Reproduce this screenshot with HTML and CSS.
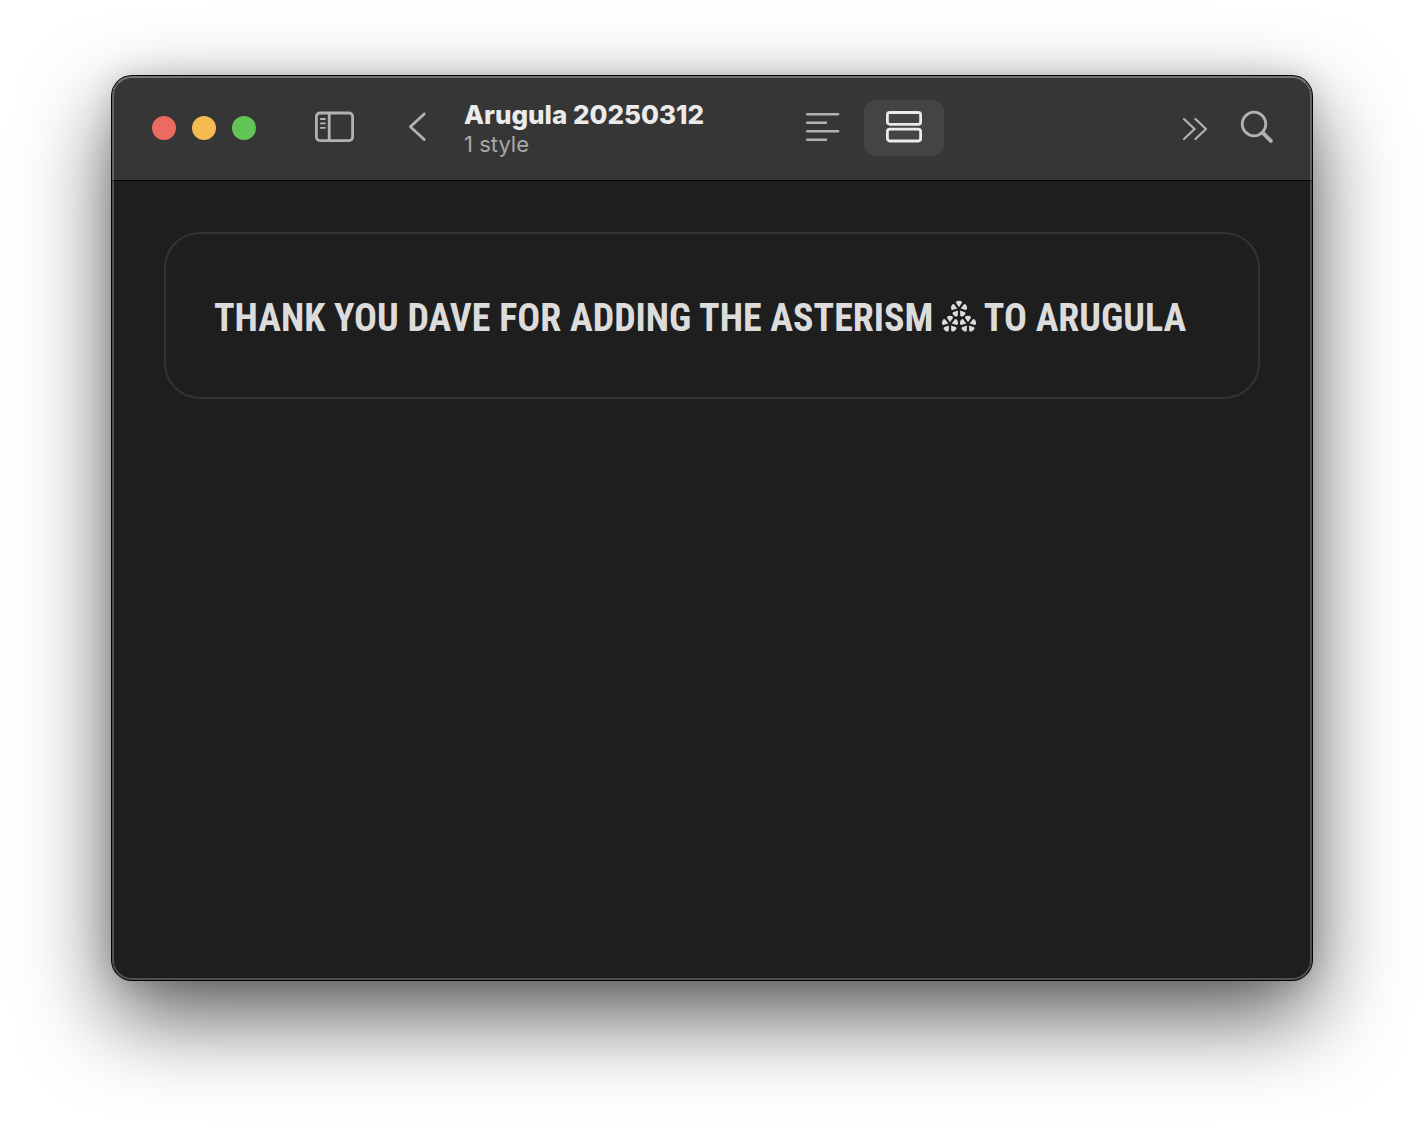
FILE: index.html
```html
<!DOCTYPE html>
<html lang="en">

<head>
  <meta charset="UTF-8" />
  <meta name="viewport" content="width=device-width, initial-scale=1.0" />
  <title>Arugula 20250312</title>
  <link rel="stylesheet" href="styles.css">
</head>

<body>
  <div class="window">
    <header class="toolbar">
      <div class="window-controls">
        <button class="dot close" aria-label="Close"></button>
        <button class="dot minimize" aria-label="Minimize"></button>
        <button class="dot expand" aria-label="Zoom"></button>
      </div>

      <button class="tool sidebar-toggle" aria-label="Toggle sidebar">
        <svg width="40" height="32" viewBox="0 0 40 32" fill="none" stroke="currentColor" stroke-width="2.8">
          <rect x="2.4" y="1" width="36.2" height="27.6" rx="3.6" />
          <path d="M15.2 2v26" />
          <path d="M6.8 7h4.2M6.8 11.4h4.2M6.8 15.8h4.2" stroke-width="1.8" stroke-linecap="round" />
        </svg>
      </button>

      <button class="tool back" aria-label="Back">
        <svg width="20" height="32" viewBox="0 0 20 32" fill="none" stroke="currentColor" stroke-width="2.8" stroke-linecap="round" stroke-linejoin="round">
          <path d="M17.2 2 3.4 14.8l13.8 12.7" />
        </svg>
      </button>

      <div class="title">
        <h1>Arugula 20250312</h1>
        <p>1 style</p>
      </div>

      <div class="view-switch">
        <button class="view" aria-label="Text view">
          <svg width="36" height="32" viewBox="0 0 36 32" stroke="currentColor" stroke-width="2.4" stroke-linecap="round">
            <path d="M1.2 2.2h31M1.2 10.7h18.8M1.2 19.2h31M1.2 27.7h18.8" />
          </svg>
        </button>
        <button class="view active" aria-label="Card view">
          <svg width="36" height="32" viewBox="0 0 36 32" fill="none" stroke="currentColor" stroke-width="2.8">
            <rect x="1.4" y="0.5" width="33.2" height="11.8" rx="2.4" />
            <rect x="1.4" y="17.2" width="33.2" height="11.8" rx="2.4" />
          </svg>
        </button>
      </div>

      <div class="toolbar-end">
        <button class="tool more" aria-label="More">
          <svg width="28" height="24" viewBox="0 0 28 24" fill="none" stroke="currentColor" stroke-width="2.2" stroke-linecap="round" stroke-linejoin="round">
            <path d="M4 3l10.6 10L4 23M15.4 3L26 13l-10.6 10" />
          </svg>
        </button>
        <button class="tool search" aria-label="Search">
          <svg width="34" height="34" viewBox="0 0 34 34" fill="none" stroke="currentColor" stroke-linecap="round">
            <circle cx="14" cy="13" r="11.8" stroke-width="2.8" />
            <path d="M22.6 21.6l8.2 8.2" stroke-width="4" />
          </svg>
        </button>
      </div>
    </header>

    <main class="content">
      <div class="sample">
        <p class="sample-text">THANK YOU DAVE FOR ADDING THE ASTERISM
          <svg class="asterism" width="34" height="32" viewBox="0 0 34 32" fill="currentColor" role="img" aria-label="asterism">
            <defs>
              <path id="petal" d="M0 -1.8L-3 -6.2Q-3.2 -8 0 -8.2Q3.2 -8 3 -6.2Z" />
              <g id="flower">
                <use href="#petal" />
                <use href="#petal" transform="rotate(72)" />
                <use href="#petal" transform="rotate(144)" />
                <use href="#petal" transform="rotate(216)" />
                <use href="#petal" transform="rotate(288)" />
              </g>
            </defs>
            <use href="#flower" x="17" y="10" />
            <use href="#flower" x="8" y="25" />
            <use href="#flower" x="26" y="25" />
          </svg>
          TO ARUGULA</p>
      </div>
    </main>
  </div>
</body>

</html>
```
FILE: styles.css
```css
* {
  box-sizing: border-box;
}

body {
  display: flex;
  min-height: 100vh;
  margin: 0;
  padding: 76px 112px 148px;
  background: #fff;
  font-family: Inter, "Liberation Sans", sans-serif;
}

h1,
p {
  margin: 0;
}

button {
  padding: 0;
  border: none;
  background: none;
  color: #b2b2b2;
  cursor: pointer;
}

svg {
  display: block;
  overflow: visible;
}

.window {
  display: flex;
  flex: 1;
  flex-direction: column;
  position: relative;
  min-width: 0;
  border-radius: 20px;
  background: #1e1e1e;
  box-shadow: 0 0 0 1px #000, 0 0 30px rgba(0, 0, 0, 0.15), 0 36px 88px rgba(0, 0, 0, 0.65);
}

/* light edge just inside the window */
.window::after {
  content: "";
  position: absolute;
  inset: 0;
  border: 2px solid rgba(255, 255, 255, 0.22);
  border-top-color: rgba(255, 255, 255, 0.32);
  border-radius: 20px;
  pointer-events: none;
}

.toolbar {
  display: flex;
  align-items: center;
  height: 105px;
  padding: 0 38px 0 40px;
  border-bottom: 1px solid #000;
  border-radius: 20px 20px 0 0;
  background: #363636;
}

.window-controls {
  display: flex;
  gap: 16px;
}

.dot {
  width: 24px;
  height: 24px;
  border-radius: 50%;
}

.close {
  background: #ed6a5e;
}

.minimize {
  background: #f5bd4f;
}

.expand {
  background: #61c454;
}

.sidebar-toggle {
  margin-left: 58px;
}

.back {
  margin-left: 53px;
}

.title {
  margin-left: 37px;
  padding-top: 2px;
  white-space: nowrap;
}

.title h1 {
  color: #ebebeb;
  font-size: 26px;
  font-weight: 800;
  line-height: 30px;
}

.title p {
  color: #a8a8a8;
  font-size: 22px;
  line-height: 28px;
}

.view-switch {
  display: flex;
  margin-left: 80px;
}

.view {
  display: flex;
  align-items: center;
  justify-content: center;
  width: 80px;
  height: 56px;
  border-radius: 12px;
}

.view.active {
  background: #444;
  color: #ebebeb;
}

.toolbar-end {
  display: flex;
  align-items: center;
  gap: 32px;
  margin-left: auto;
}

.content {
  flex: 1;
  padding: 51px 52px;
}

.sample {
  padding: 51px 48px 45px;
  border: 2px solid #333;
  border-radius: 36px;
}

.sample-text {
  color: #dcdcdc;
  font-family: "Roboto Condensed", "Liberation Sans Narrow", sans-serif;
  font-size: 38px;
  font-weight: 700;
  line-height: 67px;
  white-space: nowrap;
}

.asterism {
  display: inline-block;
}
```
